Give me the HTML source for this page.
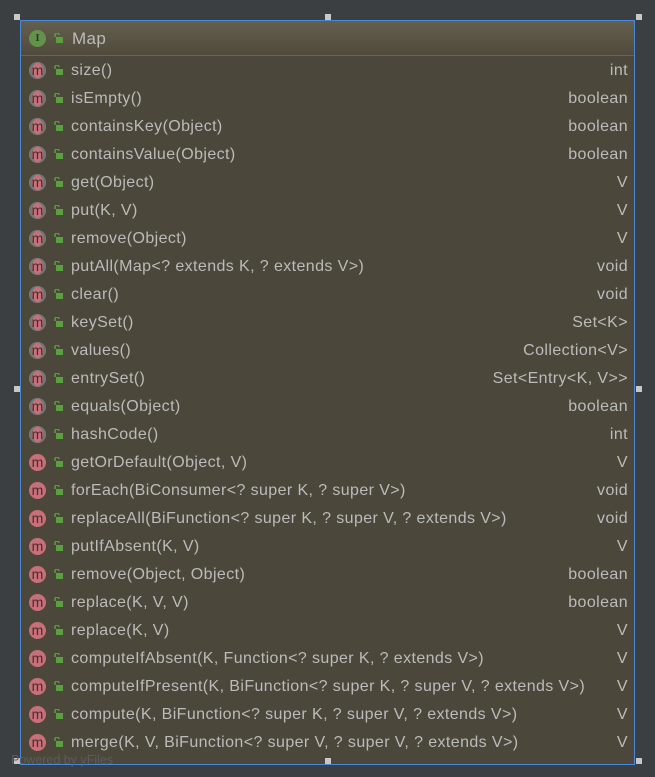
<!DOCTYPE html>
<html><head><meta charset="utf-8"><style>
body{margin:0;width:655px;height:777px;background:#3c3f41;position:relative;overflow:hidden;font-family:"Liberation Sans",sans-serif;}
.box{position:absolute;left:20px;top:20px;width:613px;height:743px;border:1px solid #4a88d8;background:#4b473a;}
.hdr{position:absolute;left:0;top:0;width:613px;height:34px;background:linear-gradient(#655f4e,#4f4a3c);border-bottom:1px solid #6a6656;}
.row{position:absolute;left:0;width:613px;height:28px;color:#bbbbbb;font-size:16px;letter-spacing:0.4px;line-height:30px;}
.n{position:absolute;left:50px;}
.t{position:absolute;right:6px;}
.ic{position:absolute;left:8px;top:6px;width:17px;height:17px;border-radius:50%;background:#c7707a;color:#4a2a2a;font-size:14px;line-height:16px;text-align:center;letter-spacing:0;}
.ic.a{box-shadow:inset 3px 0 0 #767676,inset -3px 0 0 #767676;}
.lk{position:absolute;left:32px;top:9px;}
.h{position:absolute;width:6px;height:6px;background:#c8c8c8;}
.pw{position:absolute;left:11px;top:753px;color:#5a5d5f;font-size:12.5px;}
</style></head><body>
<div class="box">
<div class="hdr">
<div style="position:absolute;left:8px;top:9px;width:17px;height:17px;border-radius:50%;background:#62934a;color:#2d3a22;font-size:11px;line-height:17px;text-align:center;font-weight:bold;font-family:'Liberation Serif',serif">I</div>
<svg style="position:absolute;left:32px;top:12px" width="10" height="10"><path d="M2 4V2a2 2 0 0 1 4 0" stroke="#5aa040" stroke-width="1.5" fill="none"/><rect x="3" y="4" width="7" height="6" fill="#5aa040"/></svg>
<div style="position:absolute;left:51px;top:1px;line-height:34px;color:#bbbbbb;font-size:17px;letter-spacing:0.4px">Map</div>
</div>
<div id="rows"></div>
</div>
<div class="h" style="left:14px;top:14px"></div><div class="h" style="left:325px;top:14px"></div><div class="h" style="left:636px;top:14px"></div>
<div class="h" style="left:14px;top:386px"></div><div class="h" style="left:636px;top:386px"></div>
<div class="h" style="left:14px;top:758px"></div><div class="h" style="left:325px;top:758px"></div><div class="h" style="left:636px;top:758px"></div>
<div class="pw">Powered by yFiles</div>
<script>
var d=[["size()","int"],["isEmpty()","boolean"],["containsKey(Object)","boolean"],["containsValue(Object)","boolean"],["get(Object)","V"],["put(K, V)","V"],["remove(Object)","V"],["putAll(Map<? extends K, ? extends V>)","void"],["clear()","void"],["keySet()","Set<K>"],["values()","Collection<V>"],["entrySet()","Set<Entry<K, V>>"],["equals(Object)","boolean"],["hashCode()","int"],["getOrDefault(Object, V)","V"],["forEach(BiConsumer<? super K, ? super V>)","void"],["replaceAll(BiFunction<? super K, ? super V, ? extends V>)","void"],["putIfAbsent(K, V)","V"],["remove(Object, Object)","boolean"],["replace(K, V, V)","boolean"],["replace(K, V)","V"],["computeIfAbsent(K, Function<? super K, ? extends V>)","V"],["computeIfPresent(K, BiFunction<? super K, ? super V, ? extends V>)","V"],["compute(K, BiFunction<? super K, ? super V, ? extends V>)","V"],["merge(K, V, BiFunction<? super V, ? super V, ? extends V>)","V"]];
var h="";function e(s){return s.replace(/</g,"&lt;").replace(/>/g,"&gt;");}
d.forEach(function(r,i){h+='<div class="row" style="top:'+(35+i*28)+'px"><div class="ic'+(i<14?' a':'')+'">m</div><svg class="lk" width="10" height="10"><path d="M2 4V2a2 2 0 0 1 4 0" stroke="#5aa040" stroke-width="1.5" fill="none"/><rect x="3" y="4" width="7" height="6" fill="#5aa040"/></svg><span class="n">'+e(r[0])+'</span><span class="t">'+e(r[1])+'</span></div>';});
document.getElementById("rows").innerHTML=h;
</script>
</body></html>
